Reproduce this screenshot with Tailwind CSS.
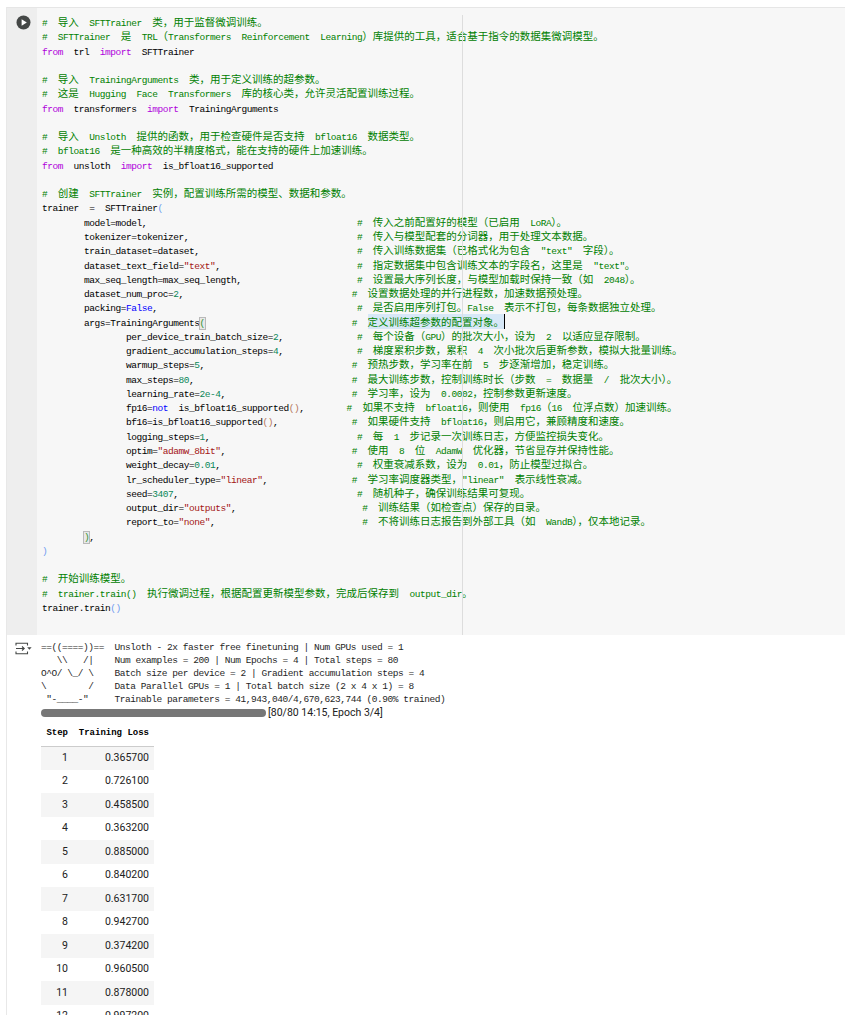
<!DOCTYPE html>
<html lang="zh">
<head>
<meta charset="utf-8">
<title>Notebook cell</title>
<script src="https://cdn.jsdelivr.net/npm/@tailwindcss/browser@4"></script>
</head>
<body class="bg-white">
<div class="w-[845px] h-[1015px] overflow-hidden bg-white pt-[7px] pl-[6px] text-black [font-family:'Liberation_Mono',monospace] text-[9.5px] tracking-[-0.45px] [&_b]:font-normal [&_b]:text-[10.5px] [&_b]:tracking-normal [&_b]:leading-none [&_b]:[font-family:'Noto_Sans_CJK_SC',sans-serif]">
  <div class="border-l border-[#e8e8e8] h-full">
    <section class="flex h-[628px] border-t border-[#e6e6e6]">
      <div class="w-[30px] shrink-0 bg-[#eeeeee] pt-[7px] pl-[9px]">
        <svg class="w-[15px] h-[15px]" viewBox="0 0 15 15"><circle cx="7.5" cy="7.5" r="7" fill="#444746"/><path d="M5.6 4.2v6.6l5.2-3.3z" fill="#fff"/></svg>
      </div>
      <div class="relative flex-1 bg-[#f7f7f7] pt-[9px] pl-[5px] leading-[14.27px] [&>div]:whitespace-pre">
        <div class="absolute left-[425px] top-[7px] bottom-0 w-px bg-[#dddddd]"></div>
        <div class="text-[#008000]">#  <b>导入</b>  SFTTrainer  <b>类，用于监督微调训练。</b></div>
        <div class="text-[#008000]">#  SFTTrainer  <b>是</b>  TRL<b>（</b>Transformers  Reinforcement  Learning<b>）库提供的工具，适合基于指令的数据集微调模型。</b></div>
        <div><span class="text-[#af00db]">from</span>  trl  <span class="text-[#af00db]">import</span>  SFTTrainer</div>
        <div> </div>
        <div class="text-[#008000]">#  <b>导入</b>  TrainingArguments  <b>类，用于定义训练的超参数。</b></div>
        <div class="text-[#008000]">#  <b>这是</b>  Hugging  Face  Transformers  <b>库的核心类，允许灵活配置训练过程。</b></div>
        <div><span class="text-[#af00db]">from</span>  transformers  <span class="text-[#af00db]">import</span>  TrainingArguments</div>
        <div> </div>
        <div class="text-[#008000]">#  <b>导入</b>  Unsloth  <b>提供的函数，用于检查硬件是否支持</b>  bfloat16  <b>数据类型。</b></div>
        <div class="text-[#008000]">#  bfloat16  <b>是一种高效的半精度格式，能在支持的硬件上加速训练。</b></div>
        <div><span class="text-[#af00db]">from</span>  unsloth  <span class="text-[#af00db]">import</span>  is_bfloat16_supported</div>
        <div> </div>
        <div class="text-[#008000]">#  <b>创建</b>  SFTTrainer  <b>实例，配置训练所需的模型、数据和参数。</b></div>
        <div>trainer  =  SFTTrainer<span class="text-[#6f9bf0]">(</span></div>
        <div>        model=model,                                        <span class="text-[#008000]">#  <b>传入之前配置好的模型（已启用</b>  LoRA<b>）。</b></span></div>
        <div>        tokenizer=tokenizer,                                <span class="text-[#008000]">#  <b>传入与模型配套的分词器，用于处理文本数据。</b></span></div>
        <div>        train_dataset=dataset,                              <span class="text-[#008000]">#  <b>传入训练数据集（已格式化为包含</b>  "text"  <b>字段）。</b></span></div>
        <div>        dataset_text_field=<span class="text-[#a31515]">"text"</span>,                          <span class="text-[#008000]">#  <b>指定数据集中包含训练文本的字段名，这里是</b>  "text"<b>。</b></span></div>
        <div>        max_seq_length=max_seq_length,                      <span class="text-[#008000]">#  <b>设置最大序列长度，与模型加载时保持一致（如</b>  2048<b>）。</b></span></div>
        <div>        dataset_num_proc=<span class="text-[#098658]">2</span>,                                <span class="text-[#008000]">#  <b>设置数据处理的并行进程数，加速数据预处理。</b></span></div>
        <div>        packing=<span class="text-[#0000ff]">False</span>,                                      <span class="text-[#008000]">#  <b>是否启用序列打包。</b>False  <b>表示不打包，每条数据独立处理。</b></span></div>
        <div>        args=TrainingArguments<span class="text-[#319331] outline outline-[#b9b9b9] bg-[#e8e8e8]">(</span>                            <span class="text-[#008000]">#  <b class="bg-[#d7e8f7] border-r border-black">定义训练超参数的配置对象。</b></span></div>
        <div>                per_device_train_batch_size=<span class="text-[#098658]">2</span>,              <span class="text-[#008000]">#  <b>每个设备（</b>GPU<b>）的批次大小，设为</b>  2  <b>以适应显存限制。</b></span></div>
        <div>                gradient_accumulation_steps=<span class="text-[#098658]">4</span>,              <span class="text-[#008000]">#  <b>梯度累积步数，累积</b>  4  <b>次小批次后更新参数，模拟大批量训练。</b></span></div>
        <div>                warmup_steps=<span class="text-[#098658]">5</span>,                            <span class="text-[#008000]">#  <b>预热步数，学习率在前</b>  5  <b>步逐渐增加，稳定训练。</b></span></div>
        <div>                max_steps=<span class="text-[#098658]">80</span>,                              <span class="text-[#008000]">#  <b>最大训练步数，控制训练时长（步数</b>  =  <b>数据量</b>  /  <b>批次大小）。</b></span></div>
        <div>                learning_rate=<span class="text-[#098658]">2e-4</span>,                        <span class="text-[#008000]">#  <b>学习率，设为</b>  0.0002<b>，控制参数更新速度。</b></span></div>
        <div>                fp16=<span class="text-[#0000ff]">not</span>  is_bfloat16_supported<span class="text-[#b5765a]">()</span>,        <span class="text-[#008000]">#  <b>如果不支持</b>  bfloat16<b>，则使用</b>  fp16<b>（</b>16  <b>位浮点数）加速训练。</b></span></div>
        <div>                bf16=is_bfloat16_supported<span class="text-[#b5765a]">()</span>,              <span class="text-[#008000]">#  <b>如果硬件支持</b>  bfloat16<b>，则启用它，兼顾精度和速度。</b></span></div>
        <div>                logging_steps=<span class="text-[#098658]">1</span>,                            <span class="text-[#008000]">#  <b>每</b>  1  <b>步记录一次训练日志，方便监控损失变化。</b></span></div>
        <div>                optim=<span class="text-[#a31515]">"adamw_8bit"</span>,                        <span class="text-[#008000]">#  <b>使用</b>  8  <b>位</b>  AdamW  <b>优化器，节省显存并保持性能。</b></span></div>
        <div>                weight_decay=<span class="text-[#098658]">0.01</span>,                          <span class="text-[#008000]">#  <b>权重衰减系数，设为</b>  0.01<b>，防止模型过拟合。</b></span></div>
        <div>                lr_scheduler_type=<span class="text-[#a31515]">"linear"</span>,                <span class="text-[#008000]">#  <b>学习率调度器类型，</b>"linear"  <b>表示线性衰减。</b></span></div>
        <div>                seed=<span class="text-[#098658]">3407</span>,                                  <span class="text-[#008000]">#  <b>随机种子，确保训练结果可复现。</b></span></div>
        <div>                output_dir=<span class="text-[#a31515]">"outputs"</span>,                        <span class="text-[#008000]">#  <b>训练结果（如检查点）保存的目录。</b></span></div>
        <div>                report_to=<span class="text-[#a31515]">"none"</span>,                            <span class="text-[#008000]">#  <b>不将训练日志报告到外部工具（如</b>  WandB<b>），仅本地记录。</b></span></div>
        <div>        <span class="text-[#319331] outline outline-[#b9b9b9] bg-[#e8e8e8]">)</span>,</div>
        <div><span class="text-[#6f9bf0]">)</span></div>
        <div> </div>
        <div class="text-[#008000]">#  <b>开始训练模型。</b></div>
        <div class="text-[#008000]">#  trainer.train()  <b>执行微调过程，根据配置更新模型参数，完成后保存到</b>  output_dir<b>。</b></div>
        <div>trainer.train<span class="text-[#6f9bf0]">()</span></div>
      </div>
    </section>
    <section class="flex">
      <div class="w-[34px] shrink-0 pt-[7px] pl-[8px]">
        <svg class="w-[17px] h-[13px]" viewBox="0 0 17 13" fill="none" stroke="#444746" stroke-width="1.1"><path d="M1 3.5V1.2h11.5v2.3M1 9.5v2.3h11.5V9.5"/><path d="M1 6.5h8M7 4.5l2.2 2-2.2 2"/><path d="M12.2 5.2h4.4l-2.2 2.6z" fill="#444746" stroke="none"/></svg>
      </div>
      <div class="pt-[6px] text-[#1f1f1f]">
        <div class="leading-[13px] [&>div]:whitespace-pre">
          <div>==((====))==  Unsloth - 2x faster free finetuning | Num GPUs used = 1</div>
          <div>   \\   /|    Num examples = 200 | Num Epochs = 4 | Total steps = 80</div>
          <div>O^O/ \_/ \    Batch size per device = 2 | Gradient accumulation steps = 4</div>
          <div>\        /    Data Parallel GPUs = 1 | Total batch size (2 x 4 x 1) = 8</div>
          <div> "-____-"     Trainable parameters = 41,943,040/4,670,623,744 (0.90% trained)</div>
        </div>
        <div class="flex items-center h-[13px] gap-[2px] [font-family:Roboto,sans-serif] tracking-normal text-[10.5px] text-[#212121]">
          <div class="w-[225px] h-[8px] rounded-full bg-[#777777]"></div>
          <span>[80/80 14:15, Epoch 3/4]</span>
        </div>
        <table class="mt-[7px] w-[113px] border-collapse [font-family:Roboto,sans-serif] tracking-normal text-[10.5px] text-[#212121] text-right">
          <thead class="[font-family:'Liberation_Mono',monospace] text-[9px] text-black">
            <tr class="h-[20px] border-b border-[#cccccc]"><th class="pr-[5px] w-[32px] align-top pt-[1px]">Step</th><th class="pr-[5px] align-top pt-[1px]">Training Loss</th></tr>
          </thead>
          <tbody class="[&>tr]:h-[23.5px] [&>tr:nth-child(odd)]:bg-[#f5f5f5] [&_td]:pr-[5px] [&_td]:p-0">
            <tr><td>1</td><td>0.365700</td></tr>
            <tr><td>2</td><td>0.726100</td></tr>
            <tr><td>3</td><td>0.458500</td></tr>
            <tr><td>4</td><td>0.363200</td></tr>
            <tr><td>5</td><td>0.885000</td></tr>
            <tr><td>6</td><td>0.840200</td></tr>
            <tr><td>7</td><td>0.631700</td></tr>
            <tr><td>8</td><td>0.942700</td></tr>
            <tr><td>9</td><td>0.374200</td></tr>
            <tr><td>10</td><td>0.960500</td></tr>
            <tr><td>11</td><td>0.878000</td></tr>
            <tr><td>12</td><td>0.997200</td></tr>
          </tbody>
        </table>
      </div>
    </section>
  </div>
</div>
</body>
</html>
